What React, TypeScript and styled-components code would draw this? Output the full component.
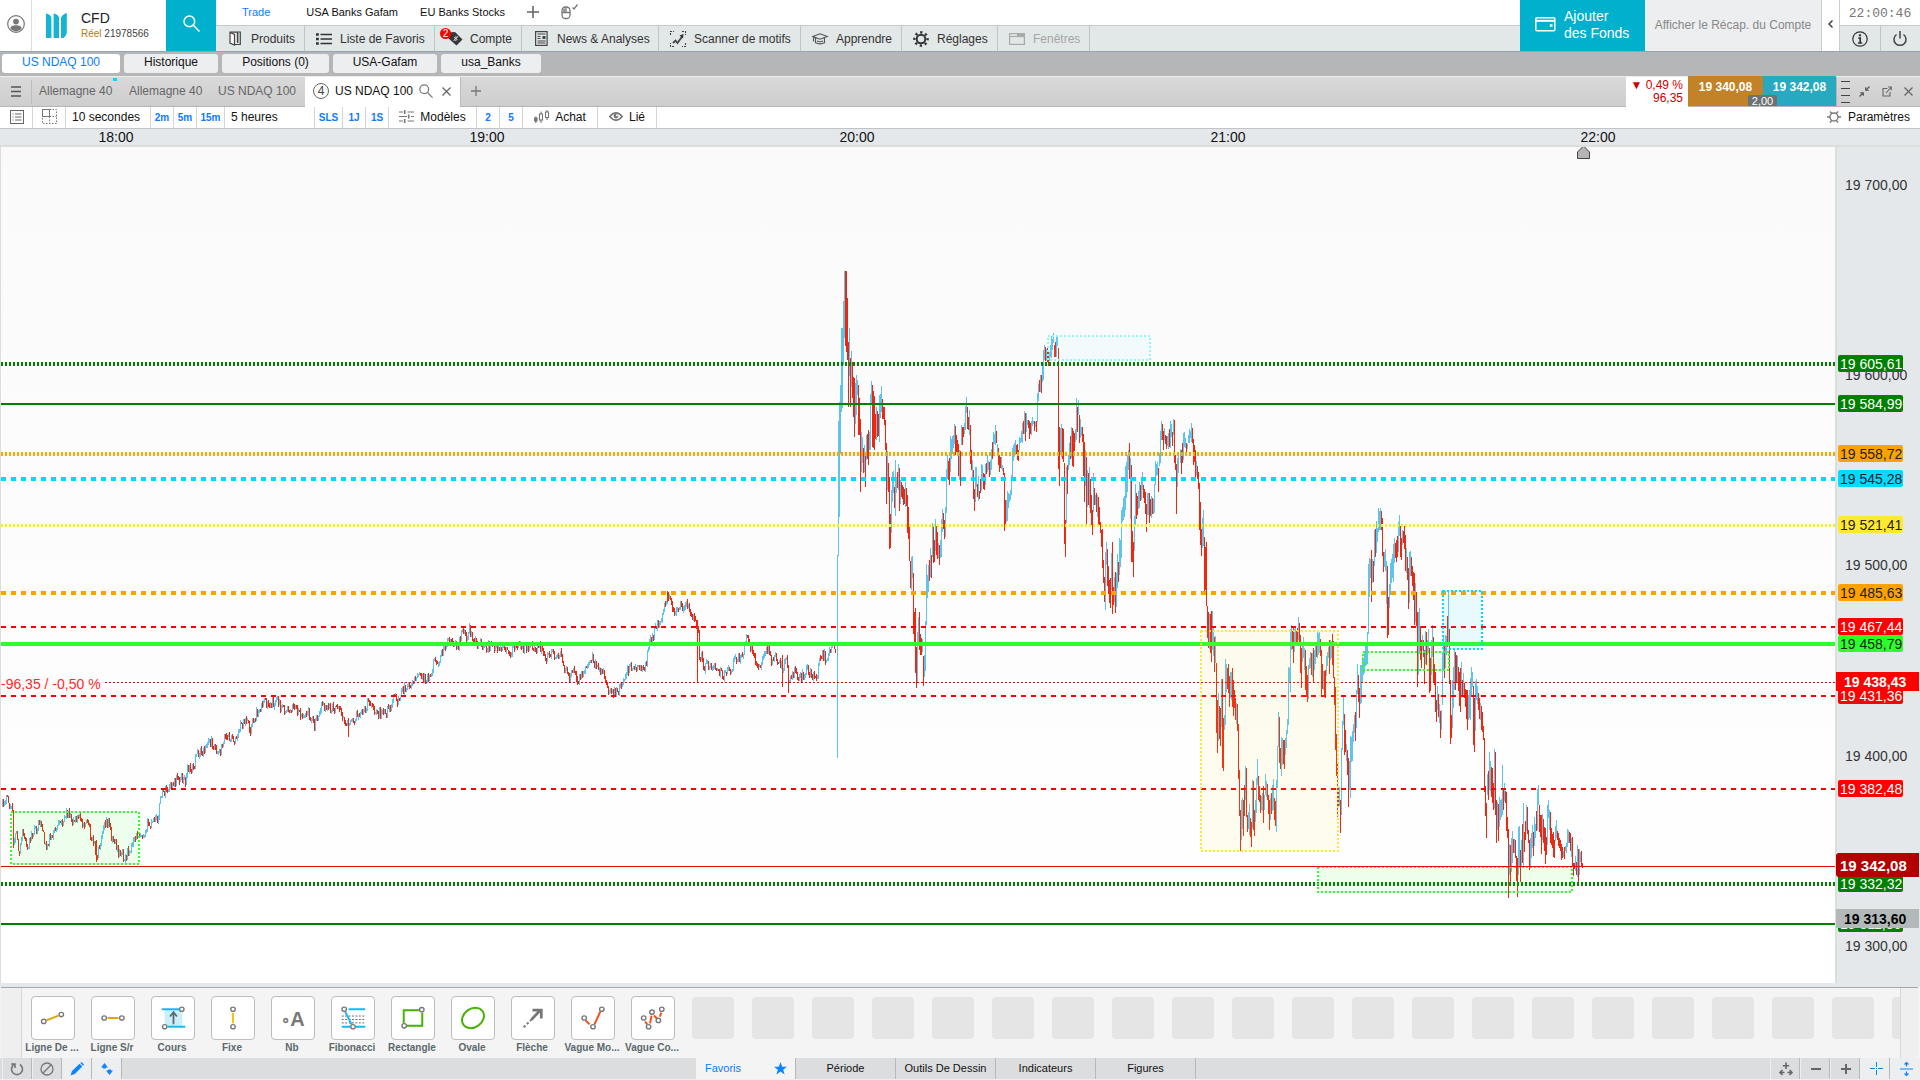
import React from 'react';
import styled, { createGlobalStyle } from 'styled-components';

const Global = createGlobalStyle`
  *, *::before, *::after { box-sizing: border-box; }
  body { margin: 0; background: #eff0f1; color: #1b1b1b; font-family: "Liberation Sans", Arial, sans-serif; font-size: 12px; }
  button { font: inherit; color: inherit; border: 0; padding: 0; margin: 0; background: none; cursor: pointer; white-space: nowrap; }
  a { color: inherit; text-decoration: none; white-space: nowrap; }
  svg { display: block; flex: none; overflow: visible; }
`;

/* ---------- icons ---------- */

const Svg = ({ w = 16, h = 16, color = '#444', sw = 1.2, children }: any) => (
  <svg width={w} height={h} viewBox={`0 0 ${w} ${h}`} fill="none" stroke={color} strokeWidth={sw} aria-hidden="true">
    {children}
  </svg>
);

const UserIcon = () => (
  <Svg w={18} h={18} color="#777">
    <circle cx="9" cy="9" r="8.3" />
    <g fill="#777" stroke="none">
      <circle cx="9" cy="6.6" r="2.9" />
      <path d="M3.4 13.6c0-2.6 2.4-3.4 5.6-3.4s5.6.8 5.6 3.4C13.200 15.400 11.200 16.400 9 16.400S4.800 15.400 3.400 13.600z" />
    </g>
  </Svg>
);
const BrandMark = () => (
  <svg width="21" height="25" viewBox="0 0 21 25" fill="#14b4d2" aria-hidden="true">
    <path d="M0 .5C2.800 1 5 2.500 5.400 4.500V25H0z" />
    <path d="M7.600 .5C10.400 1 12.600 2.500 13 4.500V25H7.600z" />
    <path d="M20.800 0C17.800.8 15.400 2.800 15 5V25h2.400C19.400 23.500 20.800 21.500 20.800 19z" />
  </svg>
);
const SearchIcon = ({ size = 16, color = '#fff' }: any) => (
  <svg width={size} height={size} viewBox="0 0 16 16" fill="none" stroke={color} strokeWidth="1.4" aria-hidden="true">
    <circle cx="6" cy="6" r="5" />
    <path d="M9.700 9.700L15.500 15.500" />
  </svg>
);
const PlusIcon = ({ size = 12, color = '#666', sw = 1.6 }: any) => (
  <Svg w={size} h={size} color={color} sw={sw}>
    <path d={`M${size / 2} 0V${size}M0 ${size / 2}H${size}`} />
  </Svg>
);
const MouseIcon = () => (
  <Svg w={17} h={16} color="#777" sw={1.3}>
    <rect x="1" y="3" width="8" height="11.500" rx="3.500" />
    <path d="M1 8.500H9M5 3V8.500" />
    <path d="M2 4.500h3V8H1.500z" fill="#999" stroke="none" />
    <path d="M11.500 3.500L13 5L16.500 0.500" />
  </Svg>
);
const BookIcon = () => (
  <Svg w={12} h={15} color="#444">
    <path d="M1 1.500L5.500 3.500V14L1 12z" fill="#fff" />
    <path d="M1 1.200H8.500V11.500M3.500 1H11.300V13.500H6M8.800 2V12" />
  </Svg>
);
const ListIcon = () => (
  <Svg w={16} h={12} color="#333" sw={1.4}>
    <path d="M4.500 1.500H16M4.500 6H16M4.500 10.500H16" />
    <path d="M0 1.500H2.800M0 6H2.800M0 10.500H2.800" strokeWidth="2.6" />
  </Svg>
);
const TagIcon = () => (
  <Svg w={17} h={15}>
    <path d="M1 1.500L9 1L16.500 8.500L10.500 14.500L2 7z" fill="#383838" stroke="none" />
    <path d="M8.500 8.800c1 1.300 3 .2 2.200-.9S8 7.700 8.600 6.500s2.500-.4 2.500.4M7.600 9.800L12 5.200" stroke="#e2e7e7" strokeWidth="1" />
  </Svg>
);
const NewsIcon = () => (
  <Svg w={13} h={15} color="#444" sw={1.2}>
    <rect x=".6" y=".6" width="11.500" height="13.800" />
    <path d="M2.500 3H10.500M2.500 5.500H5.500M2.500 7.500H5.500M2.500 10H10.500M2.500 12H10.500" />
    <path d="M7.500 6.500H10.500" strokeWidth="3" />
  </Svg>
);
const ScanIcon = () => (
  <Svg w={16} h={16} color="#444" sw={1.1}>
    <path d="M.5 4V.5H4M12 .5H15.500V4M15.500 12V15.500H12M4 15.500H.5V12" strokeDasharray="2 1" />
    <path d="M3 12L5.500 9.500L7.500 12L12.500 5" strokeWidth="1.8" />
    <path d="M9.500 4.500L13.500 3L13 7.500z" fill="#333" stroke="none" />
  </Svg>
);
const LearnIcon = () => (
  <Svg w={16} h={12} color="#555" sw={1.1}>
    <path d="M.8 3.500L8 .8L15.200 3.500L8 6.200z M3.500 5V9.800Q8 12 12.500 9.800V5M1.500 4V8.500" />
    <path d="M5 8Q8 9.500 11 8" />
  </Svg>
);
const GearIcon = () => (
  <Svg w={16} h={16} color="#333">
    <circle cx="8" cy="8" r="4.300" strokeWidth="2" />
    <circle cx="8" cy="8" r="6.600" strokeWidth="2.400" strokeDasharray="2.300 2.884" strokeDashoffset="1.100" />
  </Svg>
);
const WindowIcon = () => (
  <Svg w={16} h={12} color="#aaa">
    <rect x=".6" y=".6" width="14.800" height="10.800" />
    <path d="M.6 3.500H15.400" />
    <path d="M8 2H15" strokeWidth="3" />
  </Svg>
);
const WalletIcon = () => (
  <Svg w={21} h={15} color="#fff" sw={1.5}>
    <rect x=".8" y=".8" width="19" height="13" rx="1" />
    <path d="M.8 3.800H20" strokeWidth="2" />
    <path d="M14.800 8.500H17.500" strokeWidth="2.500" />
  </Svg>
);
const InfoIcon = () => (
  <Svg w={16} h={16} color="#333">
    <circle cx="8" cy="8" r="7.200" />
    <path d="M8 3.300V5.300" strokeWidth="2.200" />
    <path d="M6.200 7H8.200V12M6 12H10.200" strokeWidth="1.700" />
  </Svg>
);
const PowerIcon = () => (
  <Svg w={14} h={15} color="#444" sw={1.5}>
    <path d="M3.500 3.500A6 6 0 1 0 10.500 3.500M7 0V7.500" />
  </Svg>
);
const PanelIcon = () => (
  <Svg w={14} h={14} color="#666" sw={1}>
    <rect x=".5" y=".5" width="13" height="13" />
    <path d="M5 4H11.500M5 7H11.500M5 10H11.500M2.500 4H3.500M2.500 7H3.500M2.500 10H3.500" />
  </Svg>
);
const SplitIcon = () => (
  <Svg w={15} h={15} color="#777" sw={1}>
    <rect x=".5" y=".5" width="7" height="7" />
    <path d="M7.500 .5H14.500V14.500H.5V7.500M7.500 7.500V14.500M7.500 7.500H14.500" strokeDasharray="1.500 1.500" />
  </Svg>
);
const ModelIcon = () => (
  <Svg w={15} h={13} color="#777" sw={1.2}>
    <path d="M0 2H4M8.500 2H15M0 6.500H8M12 6.500H15M0 11H4M8.500 11H15" />
    <path d="M5.700 0V4M9.700 4.500V8.500M5.700 9V13" strokeWidth="1.600" />
  </Svg>
);
const CandleIcon = () => (
  <Svg w={15} h={13} color="#777" sw={1.1}>
    <path d="M1.800 6.500V13M7 1.500V13M13 0V10" />
    <rect x=".6" y="8" width="2.400" height="3" fill="#777" />
    <rect x="5.500" y="4" width="3" height="6" fill="#fff" />
    <rect x="11.500" y="2" width="3" height="5.500" fill="#fff" />
  </Svg>
);
const EyeIcon = () => (
  <Svg w={14} h={9} color="#777" sw={1.6}>
    <path d="M.8 4.500Q7-2.800 13.200 4.500Q7 11.800.8 4.500z" />
    <circle cx="7" cy="4" r="2.400" fill="#777" stroke="none" />
    <circle cx="8" cy="3.200" r="1" fill="#fff" stroke="none" />
  </Svg>
);
const SunIcon = () => (
  <Svg w={14} h={14} color="#777" sw={1.3}>
    <circle cx="7" cy="7" r="4" />
    <path d="M0 7H3M11 7H14M3 1.500L5 3.800M11 1.500L9 3.800M3 12.500L5 10.200M11 12.500L9 10.200" />
  </Svg>
);
const ShrinkIcon = () => (
  <Svg w={11} h={11} color="#555" sw={1.1}>
    <path d="M10.500 .5L7 4M6.700 1.200V4.300H9.800M.5 10.500L4 7M1.200 6.700H4.300V9.800" />
  </Svg>
);
const PopoutIcon = () => (
  <Svg w={10} h={11} color="#666" sw={1.1}>
    <path d="M5.500 2.500H1V10H8V6M4 7L9 1.500M6 1H9.300V4.300" />
  </Svg>
);
const CloseIcon = ({ color = '#666' }: any) => (
  <Svg w={9} h={9} color={color} sw={1.3}>
    <path d="M.5 .5L8.500 8.500M8.500 .5L.5 8.500" />
  </Svg>
);
const MenuIcon = () => (
  <Svg w={10} h={11} color="#555" sw={1.5}>
    <path d="M0 1H10M0 5.500H10M0 10H10" />
  </Svg>
);
const BarsIcon = () => (
  <Svg w={9} h={24} color="#444" sw={1}>
    <path d="M0 1.500H9M0 8.500H9M0 15.500H9M0 22.500H9" shapeRendering="crispEdges" />
  </Svg>
);
const ReloadIcon = () => (
  <Svg w={14} h={14} color="#777" sw={1.600}>
    <path d="M4 2.500A5.500 5.500 0 1 0 10 2.500M1 2H5V6" />
  </Svg>
);
const NoneIcon = () => (
  <Svg w={14} h={14} color="#777" sw={1.300}>
    <circle cx="7" cy="7" r="6" />
    <path d="M11.200 2.800L2.800 11.200" />
  </Svg>
);
const PencilIcon = () => (
  <Svg w={14} h={14}>
    <path d="M.5 13.500L2 9L9.500 1.800L12.300 4.600L4.800 12zM10.300 1L11.500 0L14 2.500L13 3.800z" fill="#0a84ff" stroke="none" />
  </Svg>
);
const SwapIcon = () => (
  <Svg w={12} h={12}>
    <path d="M3.500 0L7 4.500H0z M8.500 12L5 7.500H12z M2 4.500H5V5.500H2z M7 6.500H10V7.500H7z" fill="#0a84ff" stroke="none" />
  </Svg>
);
const StretchIcon = () => (
  <Svg w={14} h={14} color="#666" sw={1.600}>
    <path d="M7 .5V7M3.800 3.700H10.200M1 10.500H5.500M8.500 10.500H13M3.500 8L1 10.500L3.500 13M10.500 8L13 10.500L10.500 13" />
  </Svg>
);
const CrossIcon = () => (
  <Svg w={13} h={13} color="#0a84ff" sw={1}>
    <path d="M6.500 0V5M6.500 8V13M0 6.500H5M8 6.500H13M6 6.500H7" shapeRendering="crispEdges" />
  </Svg>
);
const FitIcon = () => (
  <Svg w={13} h={14} color="#0a84ff" sw={1.200}>
    <path d="M0 7H13M6.500 .5V4.500M6.500 9.500V13.500M4.500 2.500L6.500 .5L8.500 2.500M4.500 11.500L6.500 13.500L8.500 11.500" />
  </Svg>
);

const Dot = ({ x, y }: any) => <ellipse cx={x} cy={y} rx="2.300" ry="2.200" stroke="#777" strokeWidth="1.400" fill="#fff" />;

const toolIcons: Record<string, React.ReactNode> = {
  line: <><path d="M15 24L27 19" stroke="#e0a400" strokeWidth="2" /><Dot x={12} y={25} /><Dot x={30} y={18} /></>,
  level: <><path d="M16 21.500H27" stroke="#e0a400" strokeWidth="2" /><Dot x={12.500} y={21.500} /><Dot x={30.500} y={21.500} /></>,
  price: <><path d="M13 13H31V30H13z" fill="#c9effc" /><path d="M10 12.500H29M16 30.500H34" stroke="#14b9fa" strokeWidth="2" /><path d="M22 28V16M18.500 20L22 15.500L25.500 20" stroke="#666" strokeWidth="1.800" /><Dot x={30.500} y={12.500} /><Dot x={13} y={30.500} /></>,
  fixed: <><path d="M21.500 16V27" stroke="#f5c400" strokeWidth="2" /><Dot x={21.500} y={12.500} /><Dot x={21.500} y={30.500} /></>,
  fib: <><path d="M10 19.500H34M10 23H34M10 26.500H34" stroke="#666" strokeDasharray="2 1.500" strokeWidth="1" /><path d="M17 12.500H34M10 30.500H19M24 30.500H34M13.500 15L20 28" stroke="#14b9fa" strokeWidth="2" /><Dot x={12.500} y={12.500} /><Dot x={21.500} y={30.500} /></>,
  rect: <><path d="M12 27V13.500H28M31 16V29.500H15" stroke="#43b300" strokeWidth="2" /><Dot x={30.500} y={13} /><Dot x={12.500} y={29.500} /></>,
  oval: <ellipse cx="21.500" cy="21.500" rx="12" ry="9.500" transform="rotate(-35 21.500 21.500)" stroke="#43b300" strokeWidth="2" />,
  arrow: <><path d="M12 31L21 22" stroke="#777" strokeWidth="2" strokeDasharray="2.500 2" /><path d="M20 23L29 13.500M21 13.500H30V22" stroke="#777" strokeWidth="2.800" /></>,
  wave3: <><path d="M14 24L18 28M23 28L29 15" stroke="#ff4a14" strokeWidth="2" /><Dot x={12.500} y={21.500} /><Dot x={21.500} y={30.500} /><Dot x={30.500} y={12.500} /></>,
  wave5: <><path d="M13.500 25L15.500 28M18.500 27L20 19M22.500 19L25.500 22M28.500 20L30 16" stroke="#ff4a14" strokeWidth="2" /><Dot x={12} y={21.500} /><Dot x={17} y={30.500} /><Dot x={20.500} y={15.500} /><Dot x={27} y={24} /><Dot x={30.500} y={12.500} /></>,
};

/* ---------- header ---------- */

const Shell = styled.div`display: flex; flex-direction: column; height: 100vh; min-height: 600px; overflow: hidden;`;
const Header = styled.header`display: flex; height: 52px; background: #fff; border-bottom: 1px solid #98a2b5; flex: none;`;
const UserCell = styled.button`width: 32px; padding-left: 7px; border-right: 1px solid #ddd; padding-bottom: 3px;`;
const Account = styled.div`display: flex; gap: 14px; width: 134px; padding: 13px 0 0 14px;`;
const AccountText = styled.div`display: flex; flex-direction: column; margin-top: -3px;`;
const AccountName = styled.strong`font-size: 14px; line-height: 16px; font-weight: 400; color: #222;`;
const AccountId = styled.span`font-size: 10px; line-height: 15px; color: #444; white-space: nowrap; b { color: #b8780c; font-weight: 400; }`;
const SearchCell = styled.button`width: 50px; background: #00b0cd; display: flex; align-items: center; justify-content: center; padding-bottom: 4px;`;
const Menus = styled.div`flex: 1; display: flex; flex-direction: column; min-width: 0;`;
const PageTabs = styled.nav`display: flex; align-items: center; height: 25px; gap: 22px; padding: 0 0 2px 26px; font-size: 11px; color: #111;`;
const PageTab = styled.a<{ $active?: boolean }>`color: ${p => (p.$active ? '#0a7cff' : '#111')}; ${p => (p.$active ? 'margin-right: 14px;' : '')}`;
const ToolMenu = styled.nav`display: flex; flex: 1; background: #e2e7e7; border-top: 1px solid #c5cbcb;`;
const ToolLink = styled.button<{ $w: number; $off?: boolean }>`
  position: relative; width: ${p => p.$w}px; display: flex; align-items: center; justify-content: flex-start; gap: 8px; padding-left: 11px;
  border-right: 1px solid #c0c6c6; color: ${p => (p.$off ? '#a5a5a5' : '#333')};
`;
const IconBox = styled.span`width: 16px; display: flex; justify-content: center;`;
const CountBadge = styled.span`
  position: absolute; left: 5px; top: 2px; width: 11px; height: 11px; border-radius: 50%; background: #f00; color: #fff; font-size: 10px; line-height: 11px; text-align: center;
`;
const FundButton = styled.button`width: 125px; background: #00b0cd; color: #fff; font-size: 14px; line-height: 17px; text-align: left; display: flex; align-items: center; gap: 8px; padding: 0 0 2px 15px; white-space: normal;`;
const Recap = styled.a`width: 176px; background: #edeef0; color: #888; display: flex; align-items: center; justify-content: center; padding-bottom: 2px;`;
const Collapse = styled.button`width: 19px; border: solid #ccc; border-width: 0 1px; display: flex; align-items: center; justify-content: center; padding-bottom: 4px;`;
const Status = styled.div`width: 80px; display: flex; flex-direction: column;`;
const Clock = styled.time`height: 25px; font: 13px/28px "Liberation Mono", monospace; color: #777; text-align: center;`;
const StatusButtons = styled.div`flex: 1; display: flex; background: #e2e7e7; border-top: 1px solid #c5cbcb;`;
const StatusButton = styled.button`flex: 1; display: flex; align-items: center; justify-content: center; & + & { border-left: 1px solid #c0c6c6; }`;

/* ---------- workspace tabs ---------- */

const Workspace = styled.nav`display: flex; gap: 4px; height: 24px; padding: 2px 2px 3px; background: #b5b6b8; flex: none;`;
const WorkTab = styled.button<{ $w: number; $active?: boolean }>`
  width: ${p => p.$w}px; border-radius: 3px; background: ${p => (p.$active ? '#fff' : '#edeef0')}; color: ${p => (p.$active ? '#0a7cff' : '#111')}; line-height: 17px; padding-bottom: 2px;
`;

const ChartTabs = styled.div`display: flex; height: 31px; background: linear-gradient(#d9d9d9, #cecece); border-top: 1px solid #ececec; border-bottom: 1px solid #b5b5b5; flex: none;`;
const MenuButton = styled.button`width: 32px; padding-left: 11px; border-right: 1px solid #bdbdbd; height: 24px; align-self: center;`;
const ChartTab = styled.button<{ $w: number }>`position: relative; width: ${p => p.$w}px; color: #666; padding: 0 0 2px 7px; text-align: left;`;
const NewDot = styled.span`position: absolute; left: 81px; top: 1px; width: 4px; height: 3px; background: #00dcff;`;
const ActiveTab = styled.div`width: 156px; margin-bottom: -1px; background: #fff; border-right: 1px solid #bbb; display: flex; align-items: center; gap: 6px; padding: 0 0 2px 8px; color: #111;`;
const TabTitle = styled.span`white-space: nowrap;`;
const TabClose = styled.button`margin-left: 3px;`;
const LinkNumber = styled.span`width: 16px; height: 16px; border: 1px solid #666; border-radius: 50%; line-height: 14px; text-align: center; color: #444;`;
const AddTab = styled.button`width: 32px; padding: 0 0 2px 10px;`;
const Spacer = styled.div`flex: 1;`;
const Change = styled.div`width: 62px; margin-bottom: -1px; background: #fff; color: #c00; text-align: right; line-height: 13px; padding: 2px 5px 0 0;`;
const Quotes = styled.div`position: relative; display: flex; margin-top: -1px;`;
const Quote = styled.button<{ $w: number; $bg: string }>`width: ${p => p.$w}px; height: 30px; background: ${p => p.$bg}; color: #fff; font-weight: 700; padding-bottom: 9px;`;
const Spread = styled.span`position: absolute; left: 60px; bottom: 0; width: 29px; height: 11px; background: #6d7275; color: #fff; font-size: 11px; line-height: 12px; text-align: center; border-radius: 2px 2px 0 0;`;
const WindowButtons = styled.div`width: 84px; display: flex; align-items: center; gap: 12px; padding-left: 4px; border-left: 1px solid #b5b5b5;`;
const Grip = styled.div`margin-right: -3px;`;

const ChartBar = styled.div`display: flex; height: 22px; background: #fff; border-bottom: 1px solid #c0c4c8; flex: none; padding-left: 1px;`;
const BarButton = styled.button<{ $w: number; $small?: boolean; $left?: boolean }>`
  width: ${p => p.$w}px; display: flex; align-items: center; gap: 6px; padding-bottom: 2px; border-right: 1px solid #d5d5d5;
  ${p => (p.$left ? 'padding-left: 6px; justify-content: flex-start;' : 'justify-content: center;')}
  ${p => (p.$small ? 'color: #0a7cff; font-size: 10px; font-weight: 700; padding-bottom: 0;' : 'color: #111;')}
`;
const SettingsButton = styled.button`display: flex; align-items: center; gap: 7px; padding: 0 10px 2px 0; color: #111;`;

/* ---------- chart ---------- */

const TimeAxis = styled.div`position: relative; height: 18px; background: #e4e8eb; border-bottom: 2px solid #dcdddd; flex: none; font-size: 14px; line-height: 17px; color: #111;`;
const TimeLabel = styled.span`position: absolute; top: 0; transform: translateX(-50%);`;
const ChartRow = styled.main`flex: 1; display: flex; min-height: 0; overflow: hidden; border-bottom: 1px solid #e4e8eb;`;
const Plot = styled.div`flex: 1; position: relative; min-width: 0; border-left: 1px solid #ddd; background: linear-gradient(#fafafa, #fff);`;
const PlotSvg = styled.svg`position: absolute; left: -1px; top: 0; width: calc(100% + 1px); height: 100%;`;
const PriceAxis = styled.aside`position: relative; width: 85px; background: #e4e8eb; border-left: 2px solid #dcdddd; font-size: 14px; flex: none;`;
const TickLabel = styled.span`position: absolute; left: 8px; line-height: 16px; margin-top: -8px; color: #333; white-space: nowrap;`;
const LevelLabel = styled.span<{ $bg: string; $fg: string }>`
  position: absolute; left: 1px; width: 65px; height: 17px; margin-top: -9px; border-radius: 2px; line-height: 18px; padding-left: 2px; white-space: nowrap; background: ${p => p.$bg}; color: ${p => p.$fg};
`;
const BigLabel = styled.span<{ $bg: string; $fg: string; $large?: boolean }>`
  position: absolute; left: -1px; right: 1px; font-weight: 700; white-space: nowrap; background: ${p => p.$bg}; color: ${p => p.$fg};
  ${p => (p.$large ? 'height: 24px; line-height: 25px; margin-top: -13px; font-size: 15px; padding-left: 4px; border-radius: 3px 0 0 3px;' : 'height: 19px; line-height: 20px; margin-top: -10px; padding-left: 8px;')}
`;
const DeltaText = styled.span`position: absolute; left: 0; margin-top: -6px; line-height: 17px; padding-right: 4px; font-size: 14px; color: #ff2a2a; background: #fdfdfd; white-space: nowrap;`;

const TOP = 147;
const priceY = (p: number) => Math.round(945.8 - (p - 19300) * 1.9025) - TOP;

const levels = [
  { p: 19605.61, t: '19 605,61', c: '#008000', fg: '#fff', w: 4, dash: '2 2' },
  { p: 19584.99, t: '19 584,99', c: '#008000', fg: '#fff', w: 2 },
  { p: 19558.72, t: '19 558,72', c: '#ffa200', fg: '#222', w: 4, dash: '2 2' },
  { p: 19545.28, t: '19 545,28', c: '#00dcff', fg: '#222', w: 4, dash: '5 5' },
  { p: 19521.41, t: '19 521,41', c: '#ffe92e', fg: '#222', w: 3, dash: '2 2' },
  { p: 19485.63, t: '19 485,63', c: '#ffa200', fg: '#222', w: 4, dash: '5 5' },
  { p: 19467.44, t: '19 467,44', c: '#ff0000', fg: '#fff', w: 2, dash: '5 5' },
  { p: 19458.79, t: '19 458,79', c: '#2cff2c', fg: '#222', w: 4 },
  { p: 19431.36, t: '19 431,36', c: '#ff0000', fg: '#fff', w: 2, dash: '5 5' },
  { p: 19382.48, t: '19 382,48', c: '#ff0000', fg: '#fff', w: 2, dash: '5 5' },
  { p: 19332.32, t: '19 332,32', c: '#008000', fg: '#fff', w: 4, dash: '2 2' },
  { p: 19311.36, t: '19 311,36', c: '#008000', fg: '#fff', w: 2 },
];
const zones = [
  { x: 11, y: 812, w: 128, h: 52, c: '#2cff2c' },
  { x: 1048, y: 336, w: 102, h: 24, c: '#8ff7fb' },
  { x: 1201, y: 631, w: 137, h: 220, c: '#ffe92e' },
  { x: 1363, y: 652, w: 86, h: 18, c: '#2cff2c' },
  { x: 1443, y: 591, w: 39, h: 58, c: '#00dcff' },
  { x: 1318, y: 867, w: 254, h: 25, c: '#2cff2c' },
];

/* quiet session: x, middle */
const calm = '2 804 5 798 8 803 12 812 13 840 16 835 19 857 22 832 26 845 29 842 32 832 35 830 37 828 40 820 43 836 46 848 49 838 52 834 56 828 60 825 64 816 68 811 72 822 75 818 80 818 83 822 88 825 91 838 94 845 96 858 99 846 101 835 104 820 108 822 111 836 115 842 118 856 121 850 124 860 128 850 132 846 136 836 140 834 144 832 147 824 150 826 153 821 157 820 159 805 161 795 166 790 172 787 177 777 185 781 187 768 193 767 197 753 203 752 209 740 214 747 220 750 224 737 228 738 236 740 239 727 244 720 250 730 256 713 262 703 268 703 277 702 284 712 290 707 297 710 303 717 308 713 314 725 320 707 327 708 339 710 343 717 348 727 351 723 356 717 362 715 368 702 373 712 383 713 388 710 394 695 397 702 404 688 410 683 417 677 428 678 434 663 439 658 445 645 448 640 458 645 462 630 466 638 469 629 474 642 482 647 501 647 509 653 516 643 525 648 530 647 541 648 546 658 552 652 560 655 565 670 569 677 573 670 576 681 581 677 587 662 592 657 597 670 603 675 607 688 613 694 618 692 624 675 629 668 640 667 645 667 649 643 655 630 661 618 667 596 671 603 674 612 678 607 687 603 689 612 695 620 698 635 699 663 701 655 704 668 707 663 712 670 717 668 723 678 731 668 736 657 742 658 746 635 750 647 753 657 760 667 768 645 771 662 777 658 782 667 786 660 788 683 793 673 801 677 806 670 811 673 816 680 820 655 824 654 826 663 829 652 832 643 834 645 836 658';
const calmSpikes = [[13, 812, 848], [96, 840, 862], [348, 718, 737], [697, 620, 682], [782, 655, 687], [788, 665, 693], [667, 591, 602]];

/* volatile session: x, high, low */
const wild = '837 555 758 838 421 556 839 402 517 840 385 454 841 328 412 842 328 408 843 301 365 844 271 338 845 271 346 846 271 352 847 298 360 848 342 407 849 328 376 850 358 407 851 351 387 852 362 398 853 377 417 854 378 437 855 383 424 856 375 415 857 380 395 858 385 435 859 398 435 860 419 492 861 432 472 862 437 463 863 448 473 864 445 472 865 455 487 866 435 460 868 430 465 869 432 450 870 394 450 871 381 405 872 385 447 874 396 450 875 414 439 876 407 440 878 414 436 879 395 442 880 394 418 881 386 412 882 399 419 884 407 425 885 420 450 886 443 504 887 451 490 888 463 492 889 477 549 890 514 548 891 490 533 892 472 502 893 471 493 894 487 508 895 460 516 896 477 493 898 464 490 899 468 511 901 482 497 903 487 505 905 482 507 906 488 506 907 495 533 908 507 539 909 527 561 910 561 588 911 557 590 912 556 578 913 573 634 914 612 645 915 608 673 916 647 688 917 632 683 918 617 643 919 612 650 920 634 655 921 638 655 922 639 652 923 656 686 924 655 677 925 621 671 926 564 625 927 575 598 928 565 592 930 548 577 931 555 578 932 523 557 933 527 563 934 540 562 935 519 551 937 532 559 939 545 565 940 540 558 941 519 557 942 509 532 943 513 529 944 520 539 945 507 537 946 469 513 947 455 479 948 461 480 949 458 485 950 436 472 951 439 459 952 436 454 954 424 444 955 426 455 957 440 455 958 444 476 960 451 486 961 425 445 962 427 445 964 423 434 965 406 430 966 397 413 967 407 429 968 417 430 969 410 435 970 425 464 971 450 470 973 470 499 974 489 511 975 467 502 976 467 487 977 484 497 978 476 501 979 491 499 981 464 491 982 465 477 983 473 489 984 474 490 985 464 485 987 455 472 989 462 477 990 460 475 991 449 470 993 432 455 994 434 444 995 425 445 996 431 443 998 448 465 999 455 472 1001 457 469 1003 468 475 1004 473 531 1005 500 524 1007 491 521 1008 493 508 1010 490 500 1011 475 495 1012 448 480 1013 445 461 1015 440 455 1017 444 460 1018 450 461 1019 437 450 1021 431 442 1022 423 443 1024 411 434 1025 413 441 1026 413 432 1028 420 428 1029 421 439 1031 421 435 1032 417 426 1034 421 431 1036 421 432 1037 393 422 1038 384 401 1040 375 392 1041 375 393 1043 350 380 1044 345 360 1045 347 361 1047 346 362 1048 350 366 1050 345 357 1051 336 358 1053 333 343 1054 345 357 1056 336 357 1057 336 346 1058 348 469 1059 427 486 1060 428 455 1061 424 457 1063 429 462 1064 463 544 1065 520 557 1066 467 523 1068 455 470 1069 443 465 1071 427 458 1072 428 466 1073 431 467 1075 429 442 1076 398 440 1077 407 432 1078 400 415 1079 415 443 1080 419 438 1082 427 442 1083 434 476 1084 442 502 1085 450 486 1086 457 525 1087 470 507 1089 467 508 1090 479 513 1091 495 525 1092 510 535 1093 473 512 1094 488 505 1096 493 512 1098 497 524 1099 507 525 1101 530 547 1102 529 568 1103 560 583 1104 577 602 1105 552 610 1106 542 565 1107 549 586 1109 580 603 1110 578 608 1111 553 590 1112 542 614 1113 587 605 1114 577 602 1115 572 613 1116 573 607 1117 554 588 1118 562 582 1119 538 575 1120 540 567 1121 510 558 1122 507 522 1123 498 520 1124 496 517 1125 466 510 1127 455 492 1128 450 470 1129 443 479 1131 465 562 1132 531 562 1133 542 577 1134 516 551 1135 484 525 1137 496 515 1139 482 508 1141 479 500 1142 472 490 1143 485 498 1145 492 514 1146 504 532 1147 493 515 1149 493 523 1151 496 518 1153 499 514 1154 484 513 1155 461 485 1157 462 475 1158 468 492 1159 453 466 1160 431 463 1161 421 440 1162 424 440 1163 431 450 1164 428 440 1166 436 449 1168 433 449 1170 421 448 1171 424 437 1172 432 446 1173 419 435 1174 420 463 1175 455 470 1176 464 514 1177 458 487 1180 449 463 1181 450 474 1183 433 460 1184 432 447 1186 443 455 1188 435 443 1189 429 443 1191 423 442 1192 428 443 1193 439 465 1194 445 462 1195 450 478 1197 466 479 1198 472 489 1199 483 530 1200 502 545 1201 529 556 1202 518 548 1203 510 546 1204 537 591 1205 547 590 1206 542 606 1207 606 638 1208 612 648 1210 614 653 1211 611 662 1212 611 650 1214 637 672 1215 636 663 1216 663 733 1217 700 753 1218 693 741 1219 706 739 1220 708 746 1221 679 727 1222 679 768 1223 718 771 1224 715 730 1225 659 725 1226 664 692 1228 664 693 1229 676 707 1230 672 698 1232 668 707 1233 680 716 1234 690 708 1235 698 720 1237 704 731 1238 724 779 1239 770 816 1240 810 851 1241 800 840 1242 798 829 1243 800 836 1245 766 800 1246 768 817 1247 815 832 1249 804 835 1250 818 837 1251 822 847 1252 780 828 1253 781 830 1254 810 836 1255 800 822 1256 778 813 1257 759 785 1258 776 800 1260 795 813 1262 793 811 1263 786 823 1264 795 810 1265 774 795 1267 784 800 1269 800 830 1270 798 820 1272 785 811 1273 779 810 1274 798 820 1275 801 826 1276 780 832 1277 746 788 1278 712 747 1279 717 763 1280 748 769 1281 737 776 1282 738 765 1284 740 769 1285 738 755 1286 730 748 1287 719 734 1288 667 725 1289 668 683 1290 629 692 1291 625 650 1292 631 649 1293 627 663 1295 626 642 1297 628 645 1298 617 640 1299 623 645 1300 635 673 1301 648 688 1302 646 662 1303 637 658 1305 650 690 1306 666 697 1307 675 702 1308 665 699 1309 658 669 1310 652 668 1311 653 675 1313 648 682 1314 650 670 1315 645 664 1317 632 658 1319 632 653 1320 639 656 1321 650 696 1322 664 689 1324 671 697 1325 670 698 1326 656 676 1328 647 658 1329 640 674 1330 640 660 1331 641 658 1332 634 665 1333 641 678 1334 677 705 1335 687 750 1336 734 776 1337 763 817 1338 787 807 1339 787 806 1340 800 833 1341 748 815 1342 721 750 1343 697 725 1344 714 755 1345 730 752 1347 750 775 1348 758 807 1349 761 790 1350 736 798 1351 737 762 1352 731 761 1353 724 742 1354 715 733 1355 712 741 1356 690 728 1357 664 694 1358 675 702 1359 688 718 1360 665 704 1361 665 703 1362 657 682 1364 652 673 1365 645 666 1367 632 664 1368 564 634 1369 558 597 1370 559 578 1371 550 602 1372 559 583 1373 561 582 1374 530 566 1376 521 553 1377 528 542 1378 508 532 1380 508 530 1381 511 530 1382 518 556 1383 552 572 1385 549 571 1387 566 638 1388 597 635 1389 584 608 1390 563 595 1391 559 583 1393 544 582 1394 538 563 1396 540 562 1398 522 552 1399 515 536 1400 526 557 1401 538 560 1402 530 545 1404 526 549 1405 535 571 1407 557 580 1408 568 609 1409 552 603 1410 551 576 1411 557 576 1413 572 600 1414 573 625 1416 592 626 1417 612 687 1418 612 675 1419 608 654 1421 640 668 1422 635 650 1423 640 657 1424 650 684 1425 631 664 1426 632 665 1427 640 655 1428 629 652 1429 648 693 1430 658 691 1431 640 675 1432 625 657 1433 637 682 1434 664 685 1435 672 712 1436 700 722 1437 686 710 1438 694 717 1440 711 738 1441 710 730 1442 652 705 1443 637 670 1444 645 678 1445 635 668 1446 636 655 1448 591 642 1449 629 684 1450 680 744 1451 715 738 1452 680 728 1454 648 690 1455 652 690 1457 656 682 1459 672 706 1460 668 712 1461 662 695 1462 680 697 1463 673 694 1464 683 698 1465 689 707 1466 690 719 1467 690 730 1469 690 718 1470 678 720 1471 667 695 1472 672 687 1473 686 745 1474 698 752 1475 681 731 1476 679 700 1478 693 710 1479 698 719 1481 706 730 1482 712 732 1483 726 740 1484 738 792 1485 786 816 1486 803 838 1487 774 795 1488 771 800 1489 752 790 1491 767 797 1492 768 803 1493 783 810 1494 749 808 1495 752 815 1496 800 843 1497 802 830 1498 804 841 1499 797 827 1501 799 817 1502 765 815 1503 790 810 1504 783 801 1505 791 803 1506 792 831 1507 817 838 1508 829 898 1509 844 875 1510 845 883 1512 831 863 1514 839 853 1515 840 858 1516 856 881 1517 858 897 1518 827 875 1519 826 866 1520 850 882 1521 840 867 1523 803 868 1524 832 852 1526 805 831 1527 807 834 1528 830 843 1529 840 870 1530 838 868 1531 833 858 1532 825 848 1533 832 856 1534 817 846 1535 824 838 1537 789 830 1538 785 805 1539 805 832 1540 815 837 1541 815 854 1542 814 840 1543 819 843 1545 828 864 1546 837 855 1547 805 845 1548 800 818 1550 812 843 1551 828 845 1553 832 857 1554 840 858 1555 826 841 1556 820 838 1558 833 846 1560 840 851 1561 844 860 1562 847 858 1564 847 859 1566 843 853 1567 829 847 1568 830 843 1570 833 851 1572 837 866 1573 863 876 1575 856 871 1576 862 875 1577 845 877 1578 849 882 1579 849 875 1580 852 862 1581 851 867 1582 863 868';

type Bar = { x: number; hi: number; lo: number; up: boolean };
const buildBars = (): Bar[] => {
  let seed = 17;
  const rnd = () => { seed = (seed * 16807) % 2147483647; return seed / 2147483647; };
  const bars: Bar[] = [];
  const c = calm.split(' ').map(Number);
  let last = c[1];
  for (let i = 0; i + 3 < c.length; i += 2) {
    for (let x = c[i]; x < c[i + 2]; x++) {
      const t = (x - c[i]) / (c[i + 2] - c[i]);
      const mid = c[i + 1] + (c[i + 3] - c[i + 1]) * t + (rnd() - 0.5) * 9;
      const hi = Math.min(mid, last) - rnd() * 3;
      const lo = Math.max(mid, last) + rnd() * 3;
      bars.push({ x, hi, lo, up: mid < last });
      last = mid;
    }
  }
  calmSpikes.forEach(([x, hi, lo]) => bars.push({ x, hi, lo, up: false }));
  const w = wild.split(' ').map(Number);
  let prev = 700;
  for (let i = 0; i < w.length; i += 3) {
    const [x, hi, lo] = [w[i], w[i + 1], w[i + 2]];
    const mid = (hi + lo) / 2;
    bars.push({ x, hi, lo, up: mid < prev });
    if (i + 3 < w.length && w[i + 3] - x > 1) {
      const h2 = (hi + w[i + 4]) / 2;
      const l2 = (lo + w[i + 5]) / 2;
      bars.push({ x: x + 1, hi: h2 + rnd() * 5, lo: l2 - rnd() * 5, up: rnd() > 0.5 });
    }
    prev = mid;
  }
  return bars;
};
const bars = buildBars();
const barPath = (up: boolean) =>
  bars.filter(b => b.up === up).map(b => `M${b.x}.5 ${Math.round(b.hi) - TOP}V${Math.max(Math.round(b.lo), Math.round(b.hi) + 2) - TOP}`).join('');

const Chart = () => (
  <ChartRow>
    <Plot>
      <PlotSvg role="img" aria-label="US NDAQ 100" shapeRendering="crispEdges">
        <path d={barPath(true)} stroke="#5ec4ec" fill="none" />
        <path d={barPath(false)} stroke="#f0260e" fill="none" />
        {levels.map(l => (
          <line key={l.t} x1="1" x2="100%" y1={priceY(l.p) + (l.w % 2 ? 0.5 : 0)} y2={priceY(l.p) + (l.w % 2 ? 0.5 : 0)} stroke={l.c} strokeWidth={l.w} strokeDasharray={l.dash} />
        ))}
        <line x1="1" x2="100%" y1={priceY(19438.43) + 0.5} y2={priceY(19438.43) + 0.5} stroke="#e80000" strokeDasharray="2 2" />
        {zones.map(z => (
          <rect key={z.x} x={z.x} y={z.y - TOP} width={z.w} height={z.h} fill={z.c} fillOpacity="0.08" stroke={z.c} strokeWidth="2" strokeDasharray="2 2" />
        ))}
        <line x1="1" x2="100%" y1={priceY(19342.08) + 0.5} y2={priceY(19342.08) + 0.5} stroke="#e01010" />
        <path d="M1577.500 11.500V5L1583.500 -1L1589.500 5V11.500z" fill="#b5b5b5" stroke="#444" shapeRendering="auto" />
      </PlotSvg>
      <DeltaText style={{ top: priceY(19438.43) }}>-96,35 / -0,50 %</DeltaText>
    </Plot>
    <PriceAxis>
      {[700, 600, 500, 400, 300].map(v => (
        <TickLabel key={v} style={{ top: priceY(19000 + v) }}>{`19 ${v},00`}</TickLabel>
      ))}
      {levels.map(l => (
        <LevelLabel key={l.t} $bg={l.c} $fg={l.fg} style={{ top: priceY(l.p) }}>{l.t}</LevelLabel>
      ))}
      <BigLabel $bg="#ff0000" $fg="#fff" style={{ top: priceY(19438.43) }}>19 438,43</BigLabel>
      <BigLabel $bg="#b30000" $fg="#fff" $large style={{ top: priceY(19342.08) }}>19 342,08</BigLabel>
      <BigLabel $bg="#b3b9b9" $fg="#000" style={{ top: priceY(19313.6) - 1 }}>19 313,60</BigLabel>
    </PriceAxis>
  </ChartRow>
);

/* ---------- drawing tools and footer ---------- */

const Tools = styled.section`display: flex; height: 74px; flex: none; background: #f4f4f4; border-top: 3px solid #e4e8eb; padding: 0 2px 0 1px;`;
const ToolsInner = styled.div`display: flex; flex: 1; min-width: 0; border-top: 1px solid #a5a9ac;`;
const Gutter = styled.div<{ $right?: boolean }>`width: ${p => (p.$right ? 18 : 21)}px; background: #efefef; border: solid #d8d8d8; border-width: ${p => (p.$right ? '0 0 0 1px' : '0 1px 0 0')}; flex: none;`;
const ToolList = styled.div`flex: 1; display: flex; overflow: hidden; min-width: 0; padding-left: 1px;`;
const Tool = styled.button`flex: none; width: 60px; padding-top: 8px; display: flex; flex-direction: column; align-items: center; justify-content: flex-start; font-size: 10px; font-weight: 700; line-height: 15px; color: #5b686c;`;
const ToolCard = styled.span`width: 44px; height: 44px; border: 1px solid #bdbdbd; border-radius: 4px; background: #fff; display: block;`;
const Slot = styled.div`flex: none; width: 42px; height: 42px; margin: 9px 9px 0; border-radius: 4px; background: #e5e5e5;`;

const Footer = styled.footer`display: flex; height: 22px; background: #dcddde; border-bottom: 1px solid #efefef; padding-left: 2px; flex: none; font-size: 11px;`;
const FootButton = styled.button<{ $on?: boolean }>`width: 30px; display: flex; align-items: center; justify-content: center; border-right: 1px solid #b8b8b8; background: ${p => (p.$on ? '#edeef0' : '#dcddde')}; box-shadow: inset 1px 0 #eee;`;
const FootRight = styled.div`flex: 1; display: flex; justify-content: flex-end; ${FootButton} { padding-left: 3px; } ${FootButton}:last-child { border-right: 0; }`;
const FootTab = styled.button<{ $on?: boolean }>`
  width: 100px; padding-bottom: 1px; color: ${p => (p.$on ? '#0a7cff' : '#111')}; background: ${p => (p.$on ? '#f4f4f4' : 'transparent')}; border-right: 1px solid #b8b8b8;
  ${p => (p.$on ? 'display: flex; align-items: center; justify-content: space-between; padding: 0 8px 1px 9px;' : '')}
`;
const FootLeft = styled.div`display: flex; flex: 0 0 694px;`;

const toolList: [string, string][] = [
  ['line', 'Ligne De ...'], ['level', 'Ligne S/r'], ['price', 'Cours'], ['fixed', 'Fixe'], ['text', 'Nb'], ['fib', 'Fibonacci'],
  ['rect', 'Rectangle'], ['oval', 'Ovale'], ['arrow', 'Flèche'], ['wave3', 'Vague Mo...'], ['wave5', 'Vague Co...'],
];
const ToolName = styled.span`width: 58px; margin-right: 2px; text-align: center;`;
const NbGlyph = styled.span`display: block; font-size: 20px; line-height: 44px; text-align: center; color: #777; sup { font-size: 15px; line-height: 0; vertical-align: 1px; }`;

export default function App() {
  return (
    <Shell>
      <Global />
      <Header>
        <UserCell aria-label="Profil"><UserIcon /></UserCell>
        <Account>
          <BrandMark />
          <AccountText>
            <AccountName>CFD</AccountName>
            <AccountId><b>Réel</b> 21978566</AccountId>
          </AccountText>
        </Account>
        <SearchCell aria-label="Rechercher"><SearchIcon size={17} /></SearchCell>
        <Menus>
          <PageTabs>
            <PageTab href="#" $active>Trade</PageTab>
            <PageTab href="#">USA Banks Gafam</PageTab>
            <PageTab href="#">EU Banks Stocks</PageTab>
            <button aria-label="Ajouter"><PlusIcon /></button>
            <button aria-label="Mode souris"><MouseIcon /></button>
          </PageTabs>
          <ToolMenu>
            <ToolLink $w={89}><IconBox><BookIcon /></IconBox>Produits</ToolLink>
            <ToolLink $w={130}><IconBox><ListIcon /></IconBox>Liste de Favoris</ToolLink>
            <ToolLink $w={87}><IconBox><TagIcon /></IconBox><CountBadge>2</CountBadge>Compte</ToolLink>
            <ToolLink $w={137}><IconBox><NewsIcon /></IconBox>News &amp; Analyses</ToolLink>
            <ToolLink $w={142}><IconBox><ScanIcon /></IconBox>Scanner de motifs</ToolLink>
            <ToolLink $w={101}><IconBox><LearnIcon /></IconBox>Apprendre</ToolLink>
            <ToolLink $w={96}><IconBox><GearIcon /></IconBox>Réglages</ToolLink>
            <ToolLink $w={92} $off><IconBox><WindowIcon /></IconBox>Fenêtres</ToolLink>
          </ToolMenu>
        </Menus>
        <FundButton><WalletIcon /><span>Ajouter<br />des Fonds</span></FundButton>
        <Recap href="#">Afficher le Récap. du Compte</Recap>
        <Collapse aria-label="Réduire"><Svg w={5} h={8} color="#444" sw={1.5}><path d="M4.500 .5L1 4L4.500 7.500" /></Svg></Collapse>
        <Status>
          <Clock>22:00:46</Clock>
          <StatusButtons>
            <StatusButton aria-label="Informations"><InfoIcon /></StatusButton>
            <StatusButton aria-label="Quitter"><PowerIcon /></StatusButton>
          </StatusButtons>
        </Status>
      </Header>

      <Workspace>
        <WorkTab $w={118} $active>US NDAQ 100</WorkTab>
        <WorkTab $w={94}>Historique</WorkTab>
        <WorkTab $w={107}>Positions (0)</WorkTab>
        <WorkTab $w={104}>USA-Gafam</WorkTab>
        <WorkTab $w={100}>usa_Banks</WorkTab>
      </Workspace>

      <ChartTabs>
        <MenuButton aria-label="Menu"><MenuIcon /></MenuButton>
        <ChartTab $w={90}>Allemagne 40<NewDot /></ChartTab>
        <ChartTab $w={89}>Allemagne 40</ChartTab>
        <ChartTab $w={94}>US NDAQ 100</ChartTab>
        <ActiveTab>
          <LinkNumber>4</LinkNumber><TabTitle>US NDAQ 100</TabTitle>
          <SearchIcon size={14} color="#777" />
          <TabClose aria-label="Fermer l'onglet"><CloseIcon /></TabClose>
        </ActiveTab>
        <AddTab aria-label="Nouvel onglet"><PlusIcon size={10} color="#777" sw={1.3} /></AddTab>
        <Spacer />
        <Change>▼ 0,49 %<br />96,35</Change>
        <Quotes>
          <Quote $w={75} $bg="#c28328">19 340,08</Quote>
          <Quote $w={73} $bg="#27a9c0">19 342,08</Quote>
          <Spread>2,00</Spread>
        </Quotes>
        <WindowButtons>
          <Grip><BarsIcon /></Grip>
          <button aria-label="Réduire"><ShrinkIcon /></button>
          <button aria-label="Détacher"><PopoutIcon /></button>
          <button aria-label="Fermer"><CloseIcon /></button>
        </WindowButtons>
      </ChartTabs>

      <ChartBar>
        <BarButton $w={32} aria-label="Panneau"><PanelIcon /></BarButton>
        <BarButton $w={33} aria-label="Disposition"><SplitIcon /></BarButton>
        <BarButton $w={85} $left>10 secondes</BarButton>
        <BarButton $w={23} $small>2m</BarButton>
        <BarButton $w={23} $small>5m</BarButton>
        <BarButton $w={28} $small>15m</BarButton>
        <BarButton $w={90} $left>5 heures</BarButton>
        <BarButton $w={28} $small>SLS</BarButton>
        <BarButton $w={23} $small>1J</BarButton>
        <BarButton $w={23} $small>1S</BarButton>
        <BarButton $w={88}><ModelIcon />Modèles</BarButton>
        <BarButton $w={23} $small>2</BarButton>
        <BarButton $w={23} $small>5</BarButton>
        <BarButton $w={75}><CandleIcon />Achat</BarButton>
        <BarButton $w={59}><EyeIcon />Lié</BarButton>
        <Spacer />
        <SettingsButton><SunIcon />Paramètres</SettingsButton>
      </ChartBar>

      <TimeAxis>
        {['18:00', '19:00', '20:00', '21:00', '22:00'].map((t, i) => (
          <TimeLabel key={t} style={{ left: Math.round(116 + i * 370.5) }}>{t}</TimeLabel>
        ))}
      </TimeAxis>
      <Chart />

      <Tools>
        <ToolsInner>
          <Gutter />
          <ToolList>
            {toolList.map(([icon, label]) => (
              <Tool key={icon}>
                <ToolCard>
                  {icon === 'text'
                    ? <NbGlyph aria-hidden="true"><sup>∘</sup>A</NbGlyph>
                    : <svg width="42" height="42" viewBox="0 0 43 43" fill="none" aria-hidden="true">{toolIcons[icon]}</svg>}
                </ToolCard>
                <ToolName>{label}</ToolName>
              </Tool>
            ))}
            {Array.from({ length: 21 }, (_, i) => <Slot key={i} />)}
          </ToolList>
          <Gutter $right />
        </ToolsInner>
      </Tools>

      <Footer>
        <FootLeft>
          <FootButton aria-label="Réinitialiser"><ReloadIcon /></FootButton>
          <FootButton aria-label="Masquer"><NoneIcon /></FootButton>
          <FootButton $on aria-label="Dessiner"><PencilIcon /></FootButton>
          <FootButton $on aria-label="Inverser"><SwapIcon /></FootButton>
        </FootLeft>
        <FootTab $on>Favoris<Svg w={13} h={13}><path d="M6.500 0L8.200 4.700H13L9.200 7.700L10.600 12.500L6.500 9.600L2.400 12.500L3.800 7.700L0 4.700H4.800z" fill="#0a84ff" stroke="none" /></Svg></FootTab>
        <FootTab>Période</FootTab>
        <FootTab>Outils De Dessin</FootTab>
        <FootTab>Indicateurs</FootTab>
        <FootTab>Figures</FootTab>
        <FootRight>
          <FootButton aria-label="Étirer"><StretchIcon /></FootButton>
          <FootButton aria-label="Zoom arrière"><Svg w={10} h={2} color="#666" sw={2}><path d="M0 1H10" /></Svg></FootButton>
          <FootButton aria-label="Zoom avant"><PlusIcon size={10} sw={2} /></FootButton>
          <FootButton $on aria-label="Réticule"><CrossIcon /></FootButton>
          <FootButton $on aria-label="Ajuster"><FitIcon /></FootButton>
        </FootRight>
      </Footer>
    </Shell>
  );
}
